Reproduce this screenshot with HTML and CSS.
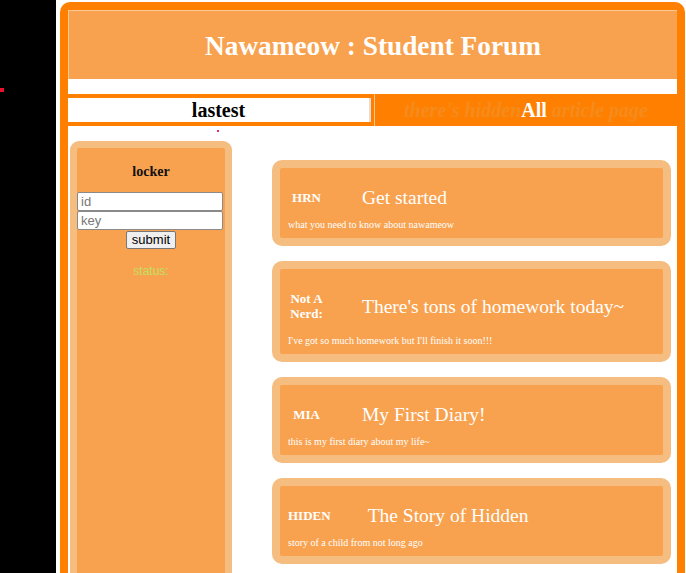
FILE: index.html
```html
<!DOCTYPE html>
<html lang="en">
<head>
<meta charset="utf-8">
<title>Nawameow : Student Forum</title>
<link rel="stylesheet" href="styles.css">
</head>
<body>
<span class="stray stray-left"></span>
<span class="stray stray-mid"></span>
<div class="page">
  <div class="void"></div>
  <div class="frame-wrap">
    <div class="frame">
      <header class="banner"><h1 class="banner-title">Nawameow : Student Forum</h1></header>
      <nav class="tabs">
        <div class="tab-current">lastest</div>
        <div class="tab-all"><span class="hint">there's hidden</span>All<span class="hint"> article page</span></div>
      </nav>
      <div class="content">
        <aside class="locker">
          <div class="locker-title">locker</div>
          <input class="field" type="text" placeholder="id">
          <input class="field" type="password" placeholder="key">
          <div class="submit-row"><button class="submit" type="button">submit</button></div>
          <div class="status">status:</div>
        </aside>
        <main class="posts">
          <article class="card">
            <div class="card-head"><div class="author">HRN</div><div class="card-title">Get started</div></div>
            <p class="card-desc">what you need to know about nawameow</p>
          </article>
          <article class="card">
            <div class="card-head"><div class="author">Not A Nerd:</div><div class="card-title">There's tons of homework today~</div></div>
            <p class="card-desc">I've got so much homework but I'll finish it soon!!!</p>
          </article>
          <article class="card">
            <div class="card-head"><div class="author">MIA</div><div class="card-title">My First Diary!</div></div>
            <p class="card-desc">this is my first diary about my life~</p>
          </article>
          <article class="card">
            <div class="card-head"><div class="author">HIDEN</div><div class="card-title">The Story of Hidden</div></div>
            <p class="card-desc">story of a child from not long ago</p>
          </article>
        </main>
      </div>
    </div>
  </div>
</div>
</body>
</html>
```
FILE: styles.css
```css
html, body {
  margin: 0;
  padding: 0;
  height: 100%;
  overflow: hidden;
  background: #ffffff;
  font-family: "Liberation Serif", "Times New Roman", serif;
}

.stray {
  position: absolute;
  background: #e8102a;
}
.stray-left { left: 0; top: 88px; width: 4px; height: 4px; }
.stray-mid { left: 217px; top: 130px; width: 2px; height: 2px; background: #e0305a; }

.page {
  display: flex;
  height: 100%;
}

.void {
  width: 56px;
  flex-shrink: 0;
  background: #000000;
}

.frame-wrap {
  padding: 2px 1px 0 4px;
  flex-shrink: 0;
}

.frame {
  width: 609px;
  height: 100%;
  border: 8px solid #ff8000;
  border-bottom: none;
  border-radius: 10px 10px 0 0;
  box-sizing: content-box;
}

.banner {
  height: 69px;
  box-sizing: border-box;
  background: #f8a24f;
  border-top: 1px solid #fcc894;
  border-left: 1px solid #fcc894;
  display: flex;
  align-items: center;
  justify-content: center;
  padding-top: 3px;
  margin-bottom: 15px;
}

.banner-title {
  margin: 0;
  color: #ffffff;
  font-size: 27.3px;
  font-weight: bold;
}

.tabs {
  display: flex;
  background: #ff8000;
  padding: 4px 0;
  height: 32px;
  box-sizing: border-box;
}

.tab-current {
  width: 301px;
  background: #ffffff;
  border-right: 2px solid #e6dcd2;
  text-align: center;
  font-weight: bold;
  font-size: 20px;
  line-height: 24px;
  color: #000000;
}

.tab-all {
  flex: 1;
  margin-left: 3px;
  margin-top: -4px;
  margin-bottom: -4px;
  border-left: 1px solid #ffc58a;
  text-align: center;
  font-weight: bold;
  font-size: 20px;
  line-height: 32px;
  color: #ffffff;
}

.hint {
  font-style: italic;
  color: #f58b1c;
}

.content {
  display: flex;
  align-items: flex-start;
  padding-top: 15px;
  height: 100%;
}

.locker {
  width: 148px;
  margin-left: 2px;
  min-height: 600px;
  border: 7px solid #f5bd80;
  border-radius: 9px;
  background: #f8a24f;
  padding-top: 16px;
  box-sizing: content-box;
}

.locker-title {
  text-align: center;
  font-weight: bold;
  font-size: 14px;
  line-height: 16px;
  color: #111111;
  margin-bottom: 12px;
}

.field {
  display: block;
  width: 146px;
  height: 19px;
  box-sizing: border-box;
  margin: 0;
  padding: 1px 3px;
  border: 1px solid #8a8a8a;
  border-radius: 2px;
  background: #ffffff;
  font-family: "Liberation Sans", Arial, sans-serif;
  font-size: 13px;
  color: #000;
}
.field::placeholder { color: #777777; }

.submit-row {
  display: flex;
  justify-content: center;
  margin-top: 1px;
}

.submit {
  height: 18px;
  padding: 0 5px;
  border: 1px solid #777777;
  border-radius: 2px;
  background: #efefef;
  font-family: "Liberation Sans", Arial, sans-serif;
  font-size: 13px;
  line-height: 16px;
  color: #000;
}

.status {
  margin-top: 15px;
  text-align: center;
  font-family: "Liberation Sans", Arial, sans-serif;
  font-size: 12px;
  line-height: 14px;
  color: #bfe060;
}

.posts {
  width: 399px;
  margin-left: 40px;
  padding-top: 19px;
}

.card {
  border: 8px solid #f5bd80;
  border-radius: 10px;
  background: #f8a24f;
  padding: 18px 8px 7px 0;
  margin: 0 0 15px;
  color: #ffffff;
}

.card-head {
  display: flex;
  align-items: center;
}

.author {
  width: min-content;
  min-width: 37px;
  padding: 4px 8px;
  text-align: center;
  font-weight: bold;
  font-size: 13px;
  line-height: 15px;
}

.card-title {
  margin-left: 29px;
  font-size: 19.5px;
  line-height: 23px;
}

.card-desc {
  margin: 10px 0 0 8px;
  font-size: 10px;
  line-height: 12px;
}
```
